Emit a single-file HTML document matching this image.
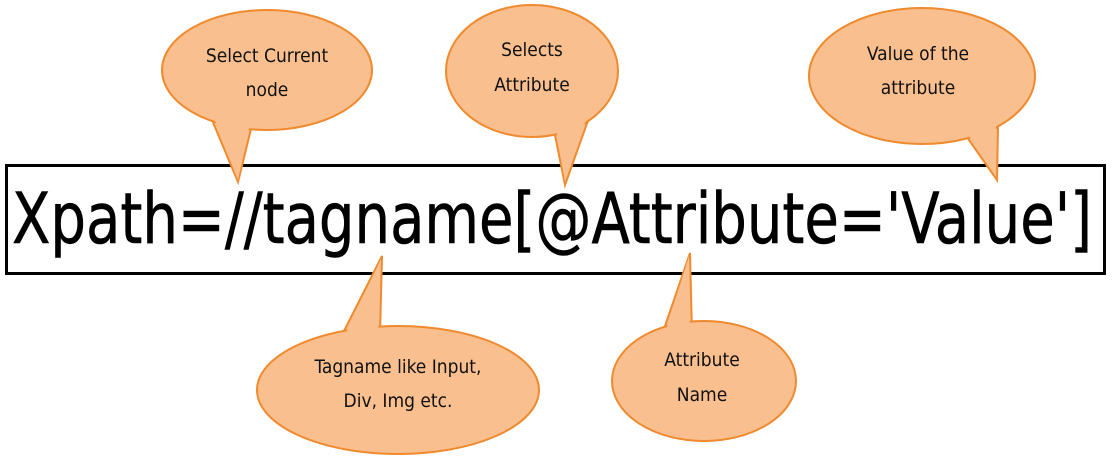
<!DOCTYPE html>
<html><head><meta charset="utf-8"><style>
html,body{margin:0;padding:0;background:#fff;width:1112px;height:463px;overflow:hidden}
</style></head><body>
<svg width="1112" height="463" viewBox="0 0 1112 463">
<rect x="6.5" y="165.5" width="1098" height="108" fill="#fff" stroke="#000" stroke-width="3"/>
<text x="12" y="243" font-family="DejaVu Sans Condensed, DejaVu Sans, sans-serif" font-size="70" textLength="1080" lengthAdjust="spacingAndGlyphs" fill="#000" stroke="#000" stroke-width="0.6">Xpath=//tagname[@Attribute='Value']</text>
<g fill="#f9bf8e" stroke="#ef8a2e" stroke-width="2">
<polygon points="212,120 238,182 252,125"/>
<ellipse cx="267" cy="70" rx="105" ry="60"/>
<polygon points="214,118 238,180 250,123" stroke="none"/>
<polygon points="553,125 565,185 590,115"/>
<ellipse cx="532" cy="71" rx="86" ry="66"/>
<polygon points="555,123 565,182 588,113" stroke="none"/>
<polygon points="962,130 997,180 998,128"/>
<ellipse cx="922" cy="76" rx="113" ry="68"/>
<polygon points="964,128 996,177 996,126" stroke="none"/>
<polygon points="342,335 382,256 380,334"/>
<ellipse cx="398" cy="390" rx="141" ry="64"/>
<polygon points="344,337 381,259 378,336" stroke="none"/>
<polygon points="662,335 690,253 692,334"/>
<ellipse cx="704" cy="381" rx="92" ry="60"/>
<polygon points="664,337 689,256 690,336" stroke="none"/>
</g>
<g font-family="DejaVu Sans Condensed, DejaVu Sans, sans-serif" font-size="19" fill="#111" text-anchor="middle">
<text x="267" y="62">Select Current</text>
<text x="267" y="96">node</text>
<text x="532" y="56">Selects</text>
<text x="532" y="91">Attribute</text>
<text x="918" y="60">Value of the</text>
<text x="918" y="94">attribute</text>
<text x="398" y="373">Tagname like Input,</text>
<text x="398" y="407">Div, Img etc.</text>
<text x="702" y="366">Attribute</text>
<text x="702" y="401">Name</text>
</g>
</svg>
</body></html>
